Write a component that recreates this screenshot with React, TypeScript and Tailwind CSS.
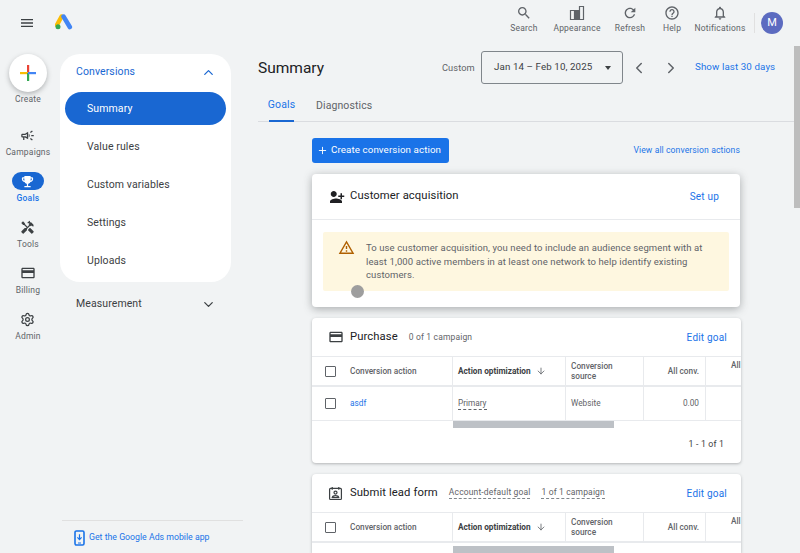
import { ChevronDown, ChevronUp, ChevronLeft, ChevronRight, ArrowDown, Settings, Plus } from "lucide-react";
import type { ReactNode } from "react";

const Mi = ({ d, size = 16, className = "", flip = false }: { d: string; size?: number; className?: string; flip?: boolean }) => (
  <svg width={size} height={size} viewBox="0 0 24 24" fill="currentColor" className={className}>
    <path d={d} transform={flip ? "matrix(-1 0 0 1 24 0)" : undefined} />
  </svg>
);

const paths = {
  menu: "M3 18h18v-2H3v2zm0-5h18v-2H3v2zm0-7v2h18V6H3z",
  search: "M15.5 14h-.79l-.28-.27C15.41 12.59 16 11.11 16 9.5 16 5.91 13.09 3 9.5 3S3 5.91 3 9.5 5.91 16 9.5 16c1.61 0 3.09-.59 4.23-1.57l.27.28v.79l5 4.99L20.49 19l-4.99-5zm-6 0C7.01 14 5 11.99 5 9.5S7.01 5 9.5 5 14 7.01 14 9.5 11.99 14 9.5 14z",
  refresh: "M17.65 6.35C16.2 4.9 14.21 4 12 4c-4.42 0-7.99 3.58-7.99 8s3.57 8 7.99 8c3.73 0 6.84-2.55 7.73-6h-2.08c-.82 2.33-3.04 4-5.65 4-3.31 0-6-2.69-6-6s2.69-6 6-6c1.66 0 3.14.69 4.22 1.78L13 11h7V4l-2.35 2.35z",
  help: "M11 18h2v-2h-2v2zm1-16C6.48 2 2 6.48 2 12s4.48 10 10 10 10-4.48 10-10S17.52 2 12 2zm0 18c-4.41 0-8-3.59-8-8s3.59-8 8-8 8 3.59 8 8-3.59 8-8 8zm0-14c-2.21 0-4 1.79-4 4h2c0-1.1.9-2 2-2s2 .9 2 2c0 2-3 1.75-3 5h2c0-2.25 3-2.5 3-5 0-2.21-1.79-4-4-4z",
  bell: "M12 22c1.1 0 2-.9 2-2h-4c0 1.1.9 2 2 2zm6-6v-5c0-3.07-1.63-5.64-4.5-6.32V4c0-.83-.67-1.5-1.5-1.5s-1.5.67-1.5 1.5v.68C7.64 5.36 6 7.92 6 11v5l-2 2v1h16v-1l-2-2zm-2 1H8v-6c0-2.48 1.51-4.5 4-4.5s4 2.02 4 4.5v6z",
  card: "M20 4H4c-1.11 0-1.99.89-1.99 2L2 18c0 1.11.89 2 2 2h16c1.11 0 2-.89 2-2V6c0-1.11-.89-2-2-2zm0 14H4v-6h16v6zm0-10H4V6h16v2z",
  campaign: "M18 11v2h4v-2h-4zm-2 6.61c.96.71 2.21 1.65 3.2 2.39.4-.53.8-1.07 1.2-1.6-.99-.74-2.24-1.68-3.2-2.4-.4.54-.8 1.08-1.2 1.61zM20.4 5.6c-.4-.53-.8-1.07-1.2-1.6-.99.74-2.24 1.68-3.2 2.4.4.53.8 1.07 1.2 1.6.96-.72 2.21-1.65 3.2-2.4zM4 9c-1.1 0-2 .9-2 2v2c0 1.1.9 2 2 2h1v4h2v-4h1l5 3V6L8 9H4zm5.03 1.71L11 9.53v4.94l-1.97-1.18-.48-.29H4v-2h4.55l.48-.29zM15.5 12c0-1.33-.58-2.53-1.5-3.35v6.69c.92-.81 1.5-2.01 1.5-3.34z",
  trophy: "M19 5h-2V3H7v2H5c-1.1 0-2 .9-2 2v1c0 2.55 1.92 4.63 4.39 4.94.63 1.5 1.98 2.63 3.61 2.96V19H7v2h10v-2h-4v-3.1c1.63-.33 2.98-1.46 3.61-2.96C19.08 12.63 21 10.55 21 8V7c0-1.1-.9-2-2-2zM5 8V7h2v3.82C5.84 10.4 5 9.3 5 8zm14 0c0 1.3-.84 2.4-2 2.82V7h2v1z",
  tools: "M21.67 18.17l-5.3-5.3h-.99l-2.54 2.54v.99l5.3 5.3c.39.39 1.02.39 1.41 0l2.12-2.12c.39-.38.39-1.02 0-1.41zM17.34 10.19l1.41-1.41 2.12 2.12c1.17-1.17 1.17-3.07 0-4.24l-3.54-3.54-1.41 1.41V1.71l-.7-.71-3.54 3.54.71.71h2.83l-1.41 1.41 1.06 1.06-2.89 2.89-4.13-4.13V5.06L4.83 2.04 2 4.87 5.03 7.9h1.41l4.13 4.13-.85.85H7.6l-5.3 5.3c-.39.39-.39 1.02 0 1.41l2.12 2.12c.39.39 1.02.39 1.41 0l5.3-5.3v-2.12l5.15-5.15 1.06 1.05z",
  personAdd: "M15 12c2.21 0 4-1.79 4-4s-1.79-4-4-4-4 1.79-4 4 1.79 4 4 4zm-9-2V7H4v3H1v2h3v3h2v-3h3v-2H6zm6 4c-2.67 0-8 1.34-8 4v2h16v-2c0-2.66-5.33-4-8-4z",
  warning: "M12 5.99L19.53 19H4.47L12 5.99M12 2L1 21h22L12 2zm1 14h-2v2h2v-2zm0-6h-2v4h2v-4z",
};

const GoogleAdsLogo = () => (
  <svg width="18" height="16" viewBox="0 0 18 16">
    <path d="M6.6 2.5 1.9 11" stroke="#fbbc04" strokeWidth="4.4" strokeLinecap="round" />
    <path d="M8.6 2.6 14.8 13" stroke="#4285f4" strokeWidth="4.6" strokeLinecap="round" />
    <circle cx="3" cy="12.8" r="2.5" fill="#34a853" />
  </svg>
);

const ColorPlus = () => (
  <svg width="18" height="18" viewBox="0 0 18 18">
    <rect x="8" y="1" width="2.2" height="8" fill="#ea4335" />
    <rect x="1" y="8" width="8" height="2.2" fill="#fbbc04" />
    <rect x="8" y="9" width="2.2" height="8" fill="#34a853" />
    <rect x="9" y="8" width="8" height="2.2" fill="#4285f4" />
  </svg>
);

const AppearanceIcon = () => (
  <svg width="16" height="16" viewBox="0 0 16 16" className="text-[#5f6368]">
    <path d="M1.5 5.5h4v9h-4zM10.5 1.5h4v13h-4z" fill="none" stroke="currentColor" strokeWidth="1.2" />
    <rect x="5.5" y="5" width="5" height="10" fill="currentColor" />
  </svg>
);

const LeadIcon = () => (
  <svg width="15" height="15" viewBox="0 0 16 16" fill="none" stroke="#3c4043" strokeWidth="1.3">
    <rect x="1.7" y="2.6" width="12.6" height="11.8" rx="1" />
    <path d="M4.5 1v3M11.5 1v3" />
    <circle cx="8" cy="7" r="1.6" />
    <path d="M4.5 12.4c.4-1.6 2-2.1 3.5-2.1s3.1.5 3.5 2.1z" />
  </svg>
);

const PhoneIcon = () => (
  <svg width="11" height="16" viewBox="0 0 11 16" fill="none">
    <rect x="1" y="1" width="9" height="14" rx="1.4" stroke="#1a73e8" strokeWidth="1.6" />
    <path d="M5.5 4.2v5M3.4 7.4l2.1 2.2 2.1-2.2" stroke="#1a73e8" strokeWidth="1.2" />
    <path d="M4 13h3" stroke="#1a73e8" strokeWidth="1" />
  </svg>
);

const TopAction = ({ icon, label, w }: { icon: ReactNode; label: string; w: string }) => (
  <div className={`${w} flex flex-col items-center`}>
    <div className="h-[16px] flex items-center justify-center">{icon}</div>
    <span className="mt-[2px] text-[8.5px] leading-[11px] tracking-[0.2px] text-[#5f6368]">{label}</span>
  </div>
);

const RailItem = ({ icon, label, active = false }: { icon: ReactNode; label: string; active?: boolean }) => (
  <div className="h-[46px] flex flex-col items-center justify-end">
    <div className={`w-[32px] h-[18px] flex items-center justify-center rounded-full ${active ? "bg-[#1967d2] text-white" : "text-[#3c4043]"}`}>
      {icon}
    </div>
    <span className={`mt-[3px] text-[8.5px] leading-[11px] tracking-[0.2px] ${active ? "text-[#1a73e8] font-medium" : "text-[#5f6368]"}`}>{label}</span>
  </div>
);

const Checkbox = () => <div className="w-[11px] h-[11px] border-[1.5px] border-[#5f6368] rounded-[1px] bg-white shrink-0" />;

const Cell = ({ w, children, className = "" }: { w: string; children?: ReactNode; className?: string }) => (
  <div className={`${w} shrink-0 h-full flex items-center border-r border-[#e8eaed] ${className}`}>{children}</div>
);

const TableHead = () => (
  <div className="flex h-[31px] border-t border-b-2 border-[#e8eaed] text-[8.25px] leading-[10px] text-[#5f6368] font-medium">
    <Cell w="w-[141px]" className="pl-[13px]">
      <Checkbox />
      <span className="ml-[14px]">Conversion action</span>
    </Cell>
    <Cell w="w-[113px]" className="pl-[5px] font-bold text-[#3c4043]">
      Action optimization
      <ArrowDown size={10} className="ml-[5px] text-[#5f6368]" />
    </Cell>
    <Cell w="w-[78px]" className="pl-[5px]">Conversion<br />source</Cell>
    <Cell w="w-[62px]" className="pr-[6px] justify-end">All conv.</Cell>
    <div className="flex-1 pl-[25px] pt-[3px]">All</div>
  </div>
);

const CardTitle = ({ icon, title, children, action }: { icon: ReactNode; title: string; children?: ReactNode; action: string }) => (
  <div className="flex items-center h-[38px] pl-[16px] pr-[14px]">
    <div className="w-[22px] shrink-0">{icon}</div>
    <span className="text-[11.25px] text-[#202124] tracking-[0.1px]">{title}</span>
    {children}
    <a className="ml-auto text-[10px] text-[#1a73e8] tracking-[0.2px]">{action}</a>
  </div>
);

export default function App() {
  return (
    <div className="relative w-[800px] h-[553px] overflow-hidden bg-[#f1f3f4] font-['Roboto',sans-serif] flex flex-col">
      {/* top bar */}
      <header className="h-[46px] shrink-0 flex items-center pr-[17px]">
        <Mi d={paths.menu} size={16} className="ml-[19px] text-[#3c4043]" />
        <div className="ml-[20px] -mt-[3px]"><GoogleAdsLogo /></div>
        <div className="ml-auto flex items-center">
          <div className="flex pb-[8px]">
            <TopAction w="w-[40px]" label="Search" icon={<Mi d={paths.search} className="text-[#5f6368]" />} />
            <TopAction w="w-[66px]" label="Appearance" icon={<AppearanceIcon />} />
            <TopAction w="w-[40px]" label="Refresh" icon={<Mi d={paths.refresh} className="text-[#5f6368]" />} />
            <TopAction w="w-[44px]" label="Help" icon={<Mi d={paths.help} className="text-[#5f6368]" />} />
            <TopAction w="w-[52px]" label="Notifications" icon={<Mi d={paths.bell} className="text-[#5f6368]" />} />
          </div>
          <div className="ml-[8px] w-px h-[20px] bg-[#e0e0e0]" />
          <div className="ml-[6px] w-[22px] h-[22px] rounded-full bg-[#5c6bc0] text-white text-[11px] flex items-center justify-center">M</div>
        </div>
      </header>

      <div className="flex flex-1 min-h-0">
        {/* icon rail */}
        <nav className="w-[56px] shrink-0 flex flex-col items-center">
          <div className="w-[38px] h-[38px] mt-[8px] rounded-full bg-white shadow-[0_2px_5px_rgba(60,64,67,0.35)] flex items-center justify-center">
            <ColorPlus />
          </div>
          <span className="mt-[2px] text-[8.5px] leading-[11px] tracking-[0.2px] text-[#5f6368]">Create</span>
          <div className="mt-[7px]">
            <RailItem label="Campaigns" icon={<Mi d={paths.campaign} size={15} />} />
            <RailItem label="Goals" active icon={<Mi d={paths.trophy} size={15} />} />
            <RailItem label="Tools" icon={<Mi d={paths.tools} size={15} />} />
            <RailItem label="Billing" icon={<Mi d={paths.card} size={16} />} />
            <RailItem label="Admin" icon={<Settings size={15} strokeWidth={2} />} />
          </div>
        </nav>

        {/* section nav */}
        <aside className="w-[187px] shrink-0 flex flex-col pl-[4px] pt-[8px]">
          <div className="w-[171px] h-[228px] bg-white rounded-[20px] flex flex-col">
            <div className="h-[38px] pb-[2px] pl-[16px] pr-[15px] flex items-center justify-between text-[#1967d2]">
              <span className="text-[10.5px] tracking-[0.1px]">Conversions</span>
              <ChevronUp size={15} />
            </div>
            <div className="mx-[5px] h-[33px] rounded-full bg-[#1967d2] flex items-center pl-[22px] text-[10.5px] tracking-[0.1px] text-white">Summary</div>
            <div className="mt-[3px]">
              {["Value rules", "Custom variables", "Settings", "Uploads"].map((item) => (
                <div key={item} className="h-[38px] flex items-center pl-[27px] text-[10.5px] tracking-[0.1px] text-[#3c4043]">{item}</div>
              ))}
            </div>
          </div>
          <div className="mt-[3px] h-[38px] pl-[16px] w-[171px] pr-[15px] flex items-center justify-between text-[#3c4043]">
            <span className="text-[10.5px] tracking-[0.1px]">Measurement</span>
            <ChevronDown size={15} />
          </div>
          <div className="mt-auto ml-[2px] h-[33px] pt-[1px] border-t border-[#e0e0e0] flex items-center pl-[12px]">
            <PhoneIcon />
            <span className="ml-[4px] text-[8.75px] text-[#1a73e8]">Get the Google Ads mobile app</span>
          </div>
        </aside>

        {/* main */}
        <main className="flex-1 min-w-0 pl-[15px] pr-[6px] overflow-hidden">
          <div className="h-[43px] flex items-center">
            <h1 className="w-[64px] pt-[2px] text-[15.5px] font-normal text-[#202124] whitespace-nowrap">Summary</h1>
            <span className="ml-[120px] w-[33px] text-[9.25px] tracking-[0.1px] text-[#5f6368]">Custom</span>
            <div className="ml-[6px] w-[142px] h-[33px] border border-[#80868b] rounded-[3px] flex items-center pl-[12px] pr-[11px] justify-between text-[9.75px] tracking-[0.1px] text-[#3c4043]">
              Jan 14 – Feb 10, 2025
              <div className="w-0 h-0 border-x-[3.5px] border-x-transparent border-t-[4px] border-t-[#3c4043]" />
            </div>
            <ChevronLeft size={18} className="ml-[7px] text-[#5f6368]" />
            <ChevronRight size={18} className="ml-[14px] text-[#5f6368]" />
            <span className="ml-[15px] text-[9.75px] tracking-[0.1px] text-[#1a73e8] whitespace-nowrap">Show last 30 days</span>
          </div>
          <div className="h-[33px] flex border-b border-[#dadce0] items-stretch text-[10.5px] tracking-[0.1px]">
            <div className="ml-[11px] w-[25px] flex items-center justify-center border-b-2 border-[#1967d2] text-[#1a73e8] h-[33px]">Goals</div>
            <div className="ml-[22px] flex items-center text-[#5f6368] h-[33px]">Diagnostics</div>
          </div>

          <div className="ml-[54px] w-[429px]">
            <div className="mt-[16px] flex items-center justify-between">
              <button className="w-[137px] h-[25px] rounded-[3px] bg-[#1a73e8] text-white text-[9.75px] tracking-[0.1px] flex items-center pl-[5px]">
                <Plus size={11} className="mr-[3px]" />
                Create conversion action
              </button>
              <a className="mr-[1px] text-[8.6px] tracking-[0.1px] text-[#1a73e8]">View all conversion actions</a>
            </div>

            {/* customer acquisition */}
            <section className="mt-[11px] h-[133px] w-[428px] bg-white rounded-[4px] shadow-[0_2px_8px_rgba(60,64,67,0.4)]">
              <div className="h-[46px] flex items-center pl-[15px] pr-[21px] border-b border-[#e8eaed]">
                <Mi d={paths.personAdd} size={18} flip className="text-[#202124]" />
                <span className="ml-[5px] text-[11.25px] tracking-[0.1px] text-[#202124]">Customer acquisition</span>
                <a className="ml-auto text-[10px] tracking-[0.2px] text-[#1a73e8]">Set up</a>
              </div>
              <div className="mx-[11px] mt-[12px] h-[59px] rounded-[2px] bg-[#fef7e0] flex items-center pl-[15px] pr-[12px]">
                <Mi d={paths.warning} size={17} className="text-[#b06000] shrink-0 -mt-[28px]" />
                <p className="ml-[11px] text-[9.5px] leading-[13.6px] tracking-[0.1px] text-[#5f6368]">
                  To use customer acquisition, you need to include an audience segment with at least 1,000 active members in at least one network to help identify existing customers.
                </p>
              </div>
            </section>

            {/* purchase */}
            <section className="mt-[11px] h-[145px] bg-white rounded-[4px] shadow-[0_1px_3px_rgba(60,64,67,0.35)] overflow-hidden">
              <CardTitle title="Purchase" action="Edit goal" icon={<Mi d={paths.card} size={16} className="text-[#3c4043]" />}>
                <span className="ml-[11px] text-[8.5px] tracking-[0.15px] text-[#5f6368]">0 of 1 campaign</span>
              </CardTitle>
              <TableHead />
              <div className="flex h-[34px] border-b border-[#e8eaed] text-[8.25px] text-[#5f6368]">
                <Cell w="w-[141px]" className="pl-[13px]">
                  <Checkbox />
                  <a className="ml-[14px] text-[#1a73e8]">asdf</a>
                </Cell>
                <Cell w="w-[113px]" className="pl-[5px]">
                  <span className="border-b border-dashed border-[#5f6368] leading-[11px]">Primary</span>
                </Cell>
                <Cell w="w-[78px]" className="pl-[5px]">Website</Cell>
                <Cell w="w-[62px]" className="pr-[6px] justify-end">0.00</Cell>
              </div>
              <div className="ml-[141px] w-[161px] h-[7px] bg-[#bdc1c6]" />
              <div className="h-[33px] flex items-center justify-end pr-[17px] text-[8.75px] text-[#3c4043] tracking-[0.15px]">1 - 1 of 1</div>
            </section>

            {/* submit lead form */}
            <section className="mt-[11px] bg-white rounded-t-[4px] shadow-[0_1px_3px_rgba(60,64,67,0.35)]">
              <CardTitle title="Submit lead form" action="Edit goal" icon={<LeadIcon />}>
                <span className="ml-[11px] text-[8.5px] tracking-[0.15px] text-[#5f6368] border-b border-dashed border-[#80868b] leading-[11px]">Account-default goal</span>
                <span className="ml-[11px] text-[8.5px] tracking-[0.15px] text-[#5f6368] border-b border-dashed border-[#80868b] leading-[11px]">1 of 1 campaign</span>
              </CardTitle>
              <TableHead />
              <div className="flex h-[10px]">
                <div className="ml-[141px] mt-[3px] w-[161px] h-[7px] bg-[#bdc1c6]" />
              </div>
            </section>
          </div>
        </main>
      </div>

      {/* page scrollbar */}
      <div className="absolute right-0 top-[46px] w-[6px] h-[162px] bg-[#bdbdbd]" />
      {/* recorded pointer */}
      <div className="absolute left-[351px] top-[285px] w-[13px] h-[13px] rounded-full bg-[#9e9e9e]" />
    </div>
  );
}
